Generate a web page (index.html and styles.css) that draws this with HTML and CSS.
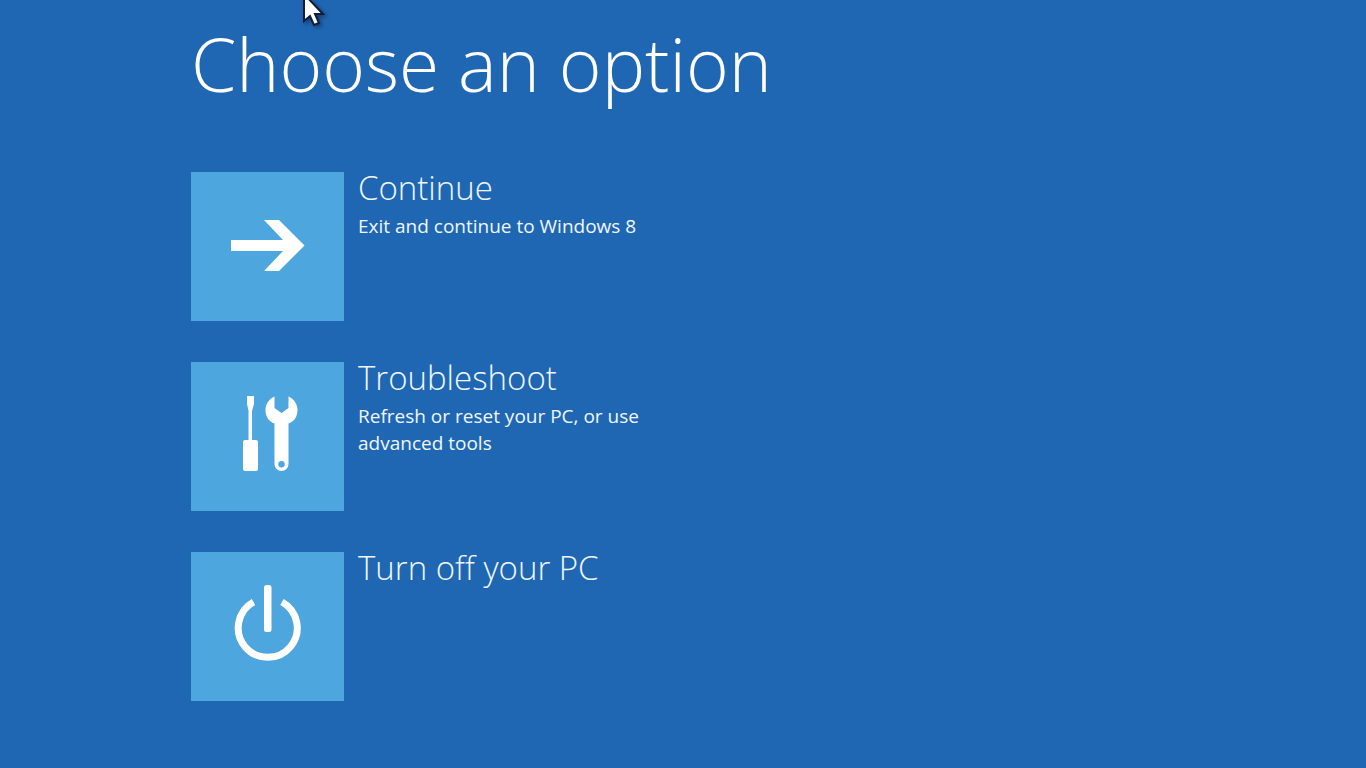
FILE: index.html
```html
<!DOCTYPE html>
<html lang="en">
<head>
<meta charset="utf-8">
<meta name="viewport" content="width=device-width, initial-scale=1">
<title>Choose an option</title>
<link rel="stylesheet" href="styles.css">
</head>
<body>
<main class="screen">
  <h1 class="title">Choose an option</h1>
  <div class="options">
    <button class="option" type="button">
      <span class="tile">
        <svg class="icon" viewBox="0 0 153 149" aria-hidden="true">
          <path d="M40 68H92L73 48H88L113.500 73.500L88 99H73L92 79H40Z"/>
        </svg>
      </span>
      <span class="text">
        <span class="name">Continue</span>
        <span class="detail">Exit and continue to Windows 8</span>
      </span>
    </button>
    <button class="option" type="button">
      <span class="tile">
        <svg class="icon" viewBox="0 0 153 149" aria-hidden="true">
          <path d="M56 34H63V42L61 49V78H65Q67 78 67 80V107Q67 109 65 109H54Q52 109 52 107V80Q52 78 54 78H57.500V49L56 42Z"/>
          <path fill-rule="evenodd" d="M83.500 34.500V46L90.500 51L97.500 46V34.500C103 37 106.500 42 106.500 48C106.500 55 103 59.500 97.500 61.500V102A7 7 0 0 1 83.500 102V61.500C78 59.500 74.500 55 74.500 48C74.500 42 78 37 83.500 34.500ZM90.500 99A3.200 3.200 0 1 0 90.500 105.400A3.200 3.200 0 1 0 90.500 99Z"/>
        </svg>
      </span>
      <span class="text">
        <span class="name">Troubleshoot</span>
        <span class="detail">Refresh or reset your PC, or use advanced tools</span>
      </span>
    </button>
    <button class="option" type="button">
      <span class="tile">
        <svg class="icon" viewBox="0 0 153 149" aria-hidden="true">
          <rect x="73" y="33" width="7.500" height="47" rx="2.500"/>
          <path class="ring" d="M62.500 50A29.500 29.500 0 1 0 91 50"/>
        </svg>
      </span>
      <span class="text">
        <span class="name">Turn off your PC</span>
      </span>
    </button>
  </div>
</main>
<svg class="pointer" viewBox="0 0 28 32" aria-hidden="true">
  <path d="M4 -6V21L10 16L14 25L19 23L15 14H23Z"/>
</svg>
</body>
</html>
```
FILE: styles.css
```css
* {
  box-sizing: border-box;
}

body {
  margin: 0;
  min-height: 100vh;
  background: #1f67b3;
  color: #fff;
  font-family: "Open Sans", "Noto Sans", sans-serif;
}

.screen {
  padding: 16px 24px 64px 191px;
}

.title {
  margin: 0 0 60px;
  font-size: 73px;
  font-weight: 300;
  line-height: 96px;
}

.options {
  display: grid;
  gap: 41px;
  max-width: 480px;
}

.option {
  display: flex;
  gap: 14px;
  padding: 0;
  border: 0;
  background: none;
  color: inherit;
  font: inherit;
  text-align: left;
  cursor: pointer;
}

.tile {
  flex: none;
  width: 153px;
  background: #4da6dd;
}

.icon {
  display: block;
  width: 100%;
  fill: #fff;
}

.ring {
  fill: none;
  stroke: #fff;
  stroke-width: 7;
}

.text {
  flex: 1;
  max-width: 290px;
}

.name,
.detail {
  display: block;
}

.name {
  font-size: 33px;
  font-weight: 300;
  line-height: 32px;
  color: #f0f6fc;
}

.detail {
  margin-top: 9px;
  font-size: 19px;
  line-height: 27px;
  color: #f0f6fc;
}

.pointer {
  position: absolute;
  top: 0;
  left: 300px;
  width: 28px;
  height: 32px;
  fill: #fff;
  stroke: #101c38;
  stroke-width: 2;
  filter: drop-shadow(2px 2px 2px rgba(0, 0, 0, 0.4));
}
```
